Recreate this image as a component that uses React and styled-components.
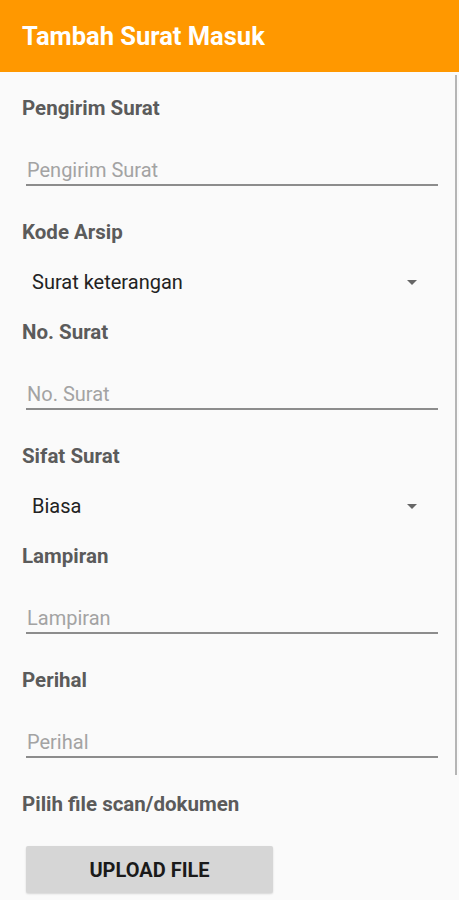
import React from 'react'
import styled, { createGlobalStyle } from 'styled-components'

const GlobalStyle = createGlobalStyle`
    html, body {
        margin: 0;
        padding: 0;
        background: #fafafa;
        font-family: Roboto, "Liberation Sans", sans-serif;
    }
`

const Screen = styled.div`
    position: relative;
    min-height: 900px;
    background: #fafafa;
    overflow: hidden;
`

const AppBar = styled.header`
    height: 72px;
    background: #ff9800;
    display: flex;
    align-items: center;
    padding: 0 22px;
    box-sizing: border-box;
`

const Title = styled.h1`
    margin: 0;
    color: #fff;
    font-size: 25.5px;
    font-weight: 700;
`

const Form = styled.div`
    padding: 24px 21px 0 22px;
    display: flex;
    flex-direction: column;
`

const Label = styled.div`
    font-size: 20.5px;
    line-height: 24px;
    font-weight: 700;
    color: #5b5b5b;
    white-space: nowrap;
`

const TextInput = styled.input`
    margin: 36px 0 34px 4px;
    width: 412px;
    height: 30px;
    padding: 0 0 0 1px;
    box-sizing: border-box;
    border: none;
    border-bottom: 2px solid #8c8c8c;
    background: transparent;
    font-family: inherit;
    font-size: 20px;
    line-height: 28px;
    color: #222;
    outline: none;

    &::placeholder {
        color: #a3a3a3;
    }
`

const Spinner = styled.div`
    margin: 26px 0 26px 10px;
    width: 400px;
    height: 24px;
    display: flex;
    align-items: center;
    justify-content: space-between;
    font-size: 20px;
    color: #222;
`

const Arrow = styled.span`
    width: 0;
    height: 0;
    margin-right: 15px;
    border-left: 5px solid transparent;
    border-right: 5px solid transparent;
    border-top: 5px solid #666;
`

const UploadButton = styled.button`
    margin: 30px 0 0 4px;
    width: 247px;
    height: 47px;
    border: none;
    border-radius: 2px;
    background: #d6d6d6;
    box-shadow: 0 1px 2px rgba(0, 0, 0, 0.15);
    font-family: inherit;
    font-size: 20px;
    font-weight: 700;
    color: #1a1a1a;
`

const ScrollBar = styled.div`
    position: absolute;
    right: 2px;
    top: 75px;
    width: 2px;
    height: 700px;
    background: #b5b5b5;
`

const fields = [
    { label: 'Pengirim Surat', type: 'text' },
    { label: 'Kode Arsip', type: 'spinner', value: 'Surat keterangan' },
    { label: 'No. Surat', type: 'text' },
    { label: 'Sifat Surat', type: 'spinner', value: 'Biasa' },
    { label: 'Lampiran', type: 'text' },
    { label: 'Perihal', type: 'text' },
]

export default function App() {
    return (
        <Screen>
            <GlobalStyle />
            <AppBar>
                <Title>Tambah Surat Masuk</Title>
            </AppBar>
            <Form>
                {fields.map(f => (
                    <React.Fragment key={f.label}>
                        <Label>{f.label}</Label>
                        {f.type === 'text'
                            ? <TextInput placeholder={f.label} />
                            : (
                                <Spinner>
                                    <span>{f.value}</span>
                                    <Arrow />
                                </Spinner>
                            )}
                    </React.Fragment>
                ))}
                <Label>Pilih file scan/dokumen</Label>
                <div>
                    <UploadButton>UPLOAD FILE</UploadButton>
                </div>
            </Form>
            <ScrollBar />
        </Screen>
    )
}
